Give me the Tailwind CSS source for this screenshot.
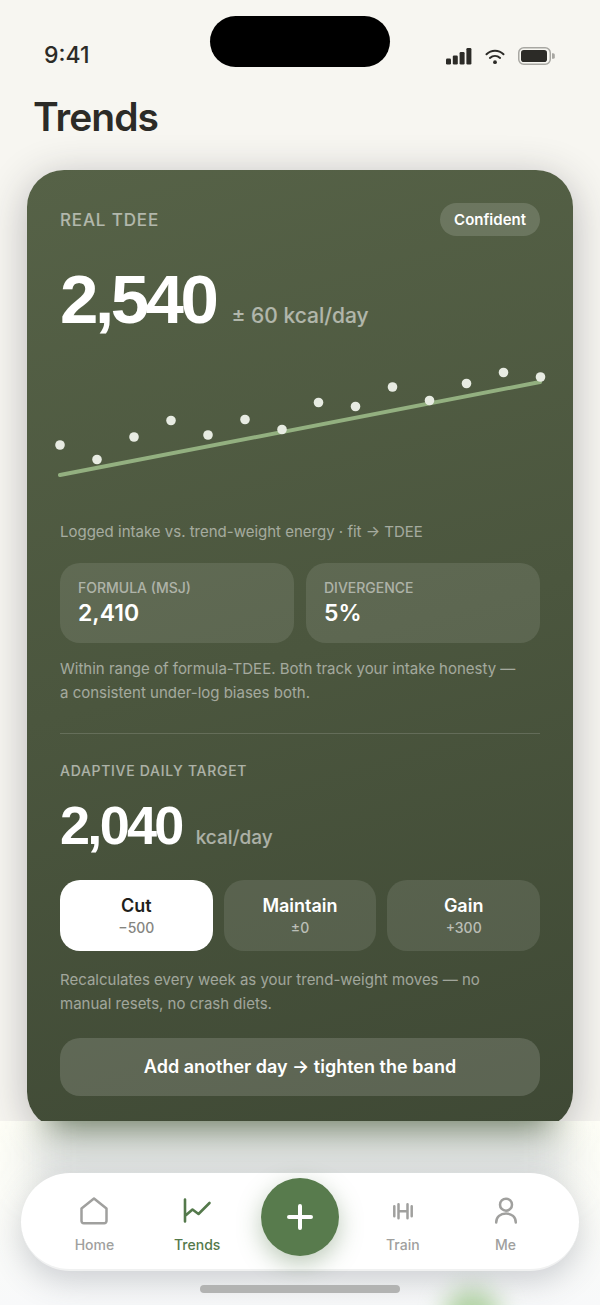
<!DOCTYPE html>
<html lang="en">
<head>
  <meta charset="UTF-8">
  <meta name="viewport" content="width=device-width, initial-scale=1.0">
  <title>Trends</title>
  <script src="https://cdn.jsdelivr.net/npm/@tailwindcss/browser@4"></script>
</head>
<body class="flex min-h-screen flex-col overflow-x-hidden bg-[#f7f6f1] font-['Inter',sans-serif] text-[#2c2b27]">
  <!-- Status bar -->
  <div class="grid grid-cols-[1fr_180px_1fr] pt-4">
    <div class="self-end pl-11 text-[23px] leading-6 font-medium">9:41</div>
    <div class="h-[51px] rounded-full bg-black"></div>
    <div class="flex items-center justify-end gap-[13px] self-end pr-11 pb-[2px]">
      <svg class="h-[18px] w-[26px]" viewBox="0 0 26 18" fill="currentColor">
        <rect x="0" y="11.5" width="5" height="6" rx="1.2"/>
        <rect x="6.8" y="8.5" width="5" height="9" rx="1.2"/>
        <rect x="13.6" y="5" width="5" height="12.5" rx="1.2"/>
        <rect x="20.4" y="1" width="5" height="16.5" rx="1.2"/>
      </svg>
      <svg class="h-[18px] w-5" viewBox="0 0 20 18" fill="none" stroke="currentColor" stroke-width="2" stroke-linecap="round">
        <path d="M1.5 7.3C6.3 2.6 13.7 2.6 18.5 7.3"/>
        <path d="M4.9 10.9C7.9 8.2 12.1 8.2 15.1 10.9"/>
        <circle cx="10" cy="15.2" r="1.9" fill="currentColor" stroke="none"/>
      </svg>
      <svg class="h-[18px] w-[38px]" viewBox="0 0 38 18">
        <rect x="0.75" y="0.75" width="31.5" height="16.5" rx="5" fill="none" stroke="#a8a7a2" stroke-width="1.5"/>
        <rect x="3" y="3" width="26" height="12" rx="2.8" fill="currentColor"/>
        <path d="M34 6.2h1.2a1.6 1.6 0 0 1 1.6 1.6v2.4a1.6 1.6 0 0 1-1.6 1.6h-1.2z" fill="#a8a7a2"/>
      </svg>
    </div>
  </div>

  <h1 class="mt-6 mb-7 px-[33px] text-[39px] leading-[51px] font-semibold tracking-tight">Trends</h1>

  <!-- TDEE card -->
  <main class="mx-[27px] rounded-[37px] bg-linear-165 from-[#566247] via-[#4b563e] to-[#3f4935] p-[33px] text-white shadow-[0_8px_40px_rgba(40,38,50,0.3)]">
    <div class="flex items-center justify-between">
      <h2 class="text-[17px] leading-6 font-medium tracking-wider text-white/55">REAL TDEE</h2>
      <span class="rounded-full bg-white/15 px-[14px] text-[15px] leading-[33px] font-semibold">Confident</span>
    </div>

    <p class="mt-7 flex items-baseline gap-4">
      <span class="font-['Liberation_Sans',sans-serif] text-[69px] leading-[72px] font-bold tracking-tighter">2,540</span>
      <span class="text-[21px] font-medium text-white/55">± 60 kcal/day</span>
    </p>

    <svg class="mt-[14px] h-[150px] w-full overflow-visible" viewBox="0 0 480 150" preserveAspectRatio="none">
      <line x1="0" y1="125" x2="480" y2="32" stroke="#93b080" stroke-width="4" stroke-linecap="round"/>
      <g fill="#e7ebe2">
        <circle cx="0" cy="95" r="4.8"/>
        <circle cx="37" cy="109.5" r="4.8"/>
        <circle cx="74" cy="87" r="4.8"/>
        <circle cx="111" cy="70.5" r="4.8"/>
        <circle cx="148" cy="85" r="4.8"/>
        <circle cx="185" cy="69.5" r="4.8"/>
        <circle cx="222" cy="79.5" r="4.8"/>
        <circle cx="258.5" cy="52.5" r="4.8"/>
        <circle cx="295.5" cy="56.5" r="4.8"/>
        <circle cx="332.5" cy="37" r="4.8"/>
        <circle cx="369.5" cy="50.5" r="4.8"/>
        <circle cx="406.5" cy="33.5" r="4.8"/>
        <circle cx="443.5" cy="22.5" r="4.8"/>
        <circle cx="480.5" cy="27" r="4.8"/>
      </g>
    </svg>

    <p class="mt-5 text-[15px] leading-6 text-white/50">Logged intake vs. trend-weight energy · fit → TDEE</p>

    <dl class="mt-[19px] grid grid-cols-2 gap-3">
      <div class="rounded-[20px] bg-white/10 px-[18px] py-[15px]">
        <dt class="text-[14px] leading-5 font-medium text-white/50">FORMULA (MSJ)</dt>
        <dd class="text-[23px] leading-[30px] font-semibold">2,410</dd>
      </div>
      <div class="rounded-[20px] bg-white/10 px-[18px] py-[15px]">
        <dt class="text-[14px] leading-5 font-medium text-white/50">DIVERGENCE</dt>
        <dd class="text-[23px] leading-[30px] font-semibold">5%</dd>
      </div>
    </dl>
    <p class="mt-[14px] pr-4 text-[15px] leading-6 text-white/50">Within range of formula-TDEE. Both track your intake honesty — a consistent under-log biases both.</p>

    <hr class="mt-7 border-white/15">

    <h2 class="mt-[27px] text-[14px] leading-5 font-medium tracking-wider text-white/55">ADAPTIVE DAILY TARGET</h2>
    <p class="mt-4 flex items-baseline gap-[14px]">
      <span class="font-['Liberation_Sans',sans-serif] text-[54px] leading-[56px] font-bold tracking-tighter">2,040</span>
      <span class="text-[19px] font-medium text-white/55">kcal/day</span>
    </p>

    <div class="mt-[27px] grid grid-cols-3 gap-[11px]">
      <button type="button" aria-pressed="true" class="rounded-[20px] bg-white pt-[14px] pb-[13px] text-[#1f1f1c]">
        <span class="block text-[18px] leading-6 font-semibold">Cut</span>
        <span class="block text-[14px] leading-5 font-medium text-[#85857f]">−500</span>
      </button>
      <button type="button" aria-pressed="false" class="rounded-[20px] bg-white/10 pt-[14px] pb-[13px]">
        <span class="block text-[18px] leading-6 font-semibold">Maintain</span>
        <span class="block text-[14px] leading-5 font-medium text-white/60">±0</span>
      </button>
      <button type="button" aria-pressed="false" class="rounded-[20px] bg-white/10 pt-[14px] pb-[13px]">
        <span class="block text-[18px] leading-6 font-semibold">Gain</span>
        <span class="block text-[14px] leading-5 font-medium text-white/60">+300</span>
      </button>
    </div>

    <p class="mt-[17px] pr-4 text-[15px] leading-6 text-white/50">Recalculates every week as your trend-weight moves — no manual resets, no crash diets.</p>

    <button type="button" class="mt-[22px] w-full rounded-[20px] bg-white/15 text-[18px] leading-[58px] font-semibold">Add another day → tighten the band</button>
  </main>

  <!-- Bottom bar -->
  <footer class="relative -mt-2 flex flex-1 flex-col overflow-hidden bg-linear-to-b from-[#fefef6] to-[#f8f9fa] px-[21px] pt-[52px] pb-3">
    <!-- Shade of the card showing through the bar -->
    <div class="absolute inset-x-12 -top-16 h-18 bg-[#3e5232]/80 blur-[18px]"></div>
    <div class="absolute inset-x-8 top-2 h-14 bg-[#7d8896]/25 blur-[20px]"></div>
    <div class="absolute left-[444px] -bottom-10 size-14 rounded-full bg-[#a9cf98]/90 blur-[12px]"></div>

    <nav class="relative grid h-[98px] grid-cols-5 rounded-full border-b-2 border-[#f0f1f1] bg-white px-[22px] text-[14px] leading-5 font-medium text-[#a0a09e] shadow-[0_10px_32px_rgba(60,65,85,0.24)]">
      <a href="#" class="flex flex-col items-center gap-[9px] pt-[23px]">
        <svg class="size-[30px]" viewBox="0 0 30 30" fill="none" stroke="currentColor" stroke-width="2.5" stroke-linecap="round" stroke-linejoin="round">
          <path d="M2.5 12.5 15 2.5 27.5 12.5V25a2.2 2.2 0 0 1-2.2 2.2H4.7A2.2 2.2 0 0 1 2.5 25z"/>
        </svg>
        <span>Home</span>
      </a>
      <a href="#" aria-current="page" class="flex flex-col items-center gap-[9px] pt-[23px] text-[#54794b]">
        <svg class="size-[30px]" viewBox="0 0 30 30" fill="none" stroke="currentColor" stroke-width="2.6" stroke-linecap="round" stroke-linejoin="round">
          <path d="M3 3.5V25.500M3.5 19.5 10.5 13.5 16.5 18 27.500 7"/>
        </svg>
        <span>Trends</span>
      </a>
      <button type="button" aria-label="Add" class="mt-[5px] flex size-[78px] items-center justify-center justify-self-center rounded-full bg-[#587b4d] text-white shadow-[0_8px_24px_rgba(88,123,77,0.4)]">
        <svg class="size-[30px]" viewBox="0 0 30 30" fill="none" stroke="currentColor" stroke-width="4" stroke-linecap="round">
          <path d="M15 4V26M4 15H26"/>
        </svg>
      </button>
      <a href="#" class="flex flex-col items-center gap-[9px] pt-[23px]">
        <svg class="size-[30px]" viewBox="0 0 30 30" fill="none" stroke="currentColor" stroke-width="2.5" stroke-linecap="round">
          <path d="M6.300 10.200V20.300M10.500 8.200V22.300M19.500 8.200V22.300M23.700 10.200V20.300M10.500 15.200H19.500"/>
        </svg>
        <span>Train</span>
      </a>
      <a href="#" class="flex flex-col items-center gap-[9px] pt-[23px]">
        <svg class="size-[30px]" viewBox="0 0 30 30" fill="none" stroke="currentColor" stroke-width="2.5" stroke-linecap="round">
          <circle cx="15" cy="8.7" r="6"/>
          <path d="M5.2 26.500C5.2 21 9.4 17.500 15 17.500S24.800 21 24.800 26.500"/>
        </svg>
        <span>Me</span>
      </a>
    </nav>

    <div class="relative mx-auto mt-auto h-2 w-[200px] rounded-full bg-[#b2b3b2]"></div>
  </footer>
</body>
</html>
